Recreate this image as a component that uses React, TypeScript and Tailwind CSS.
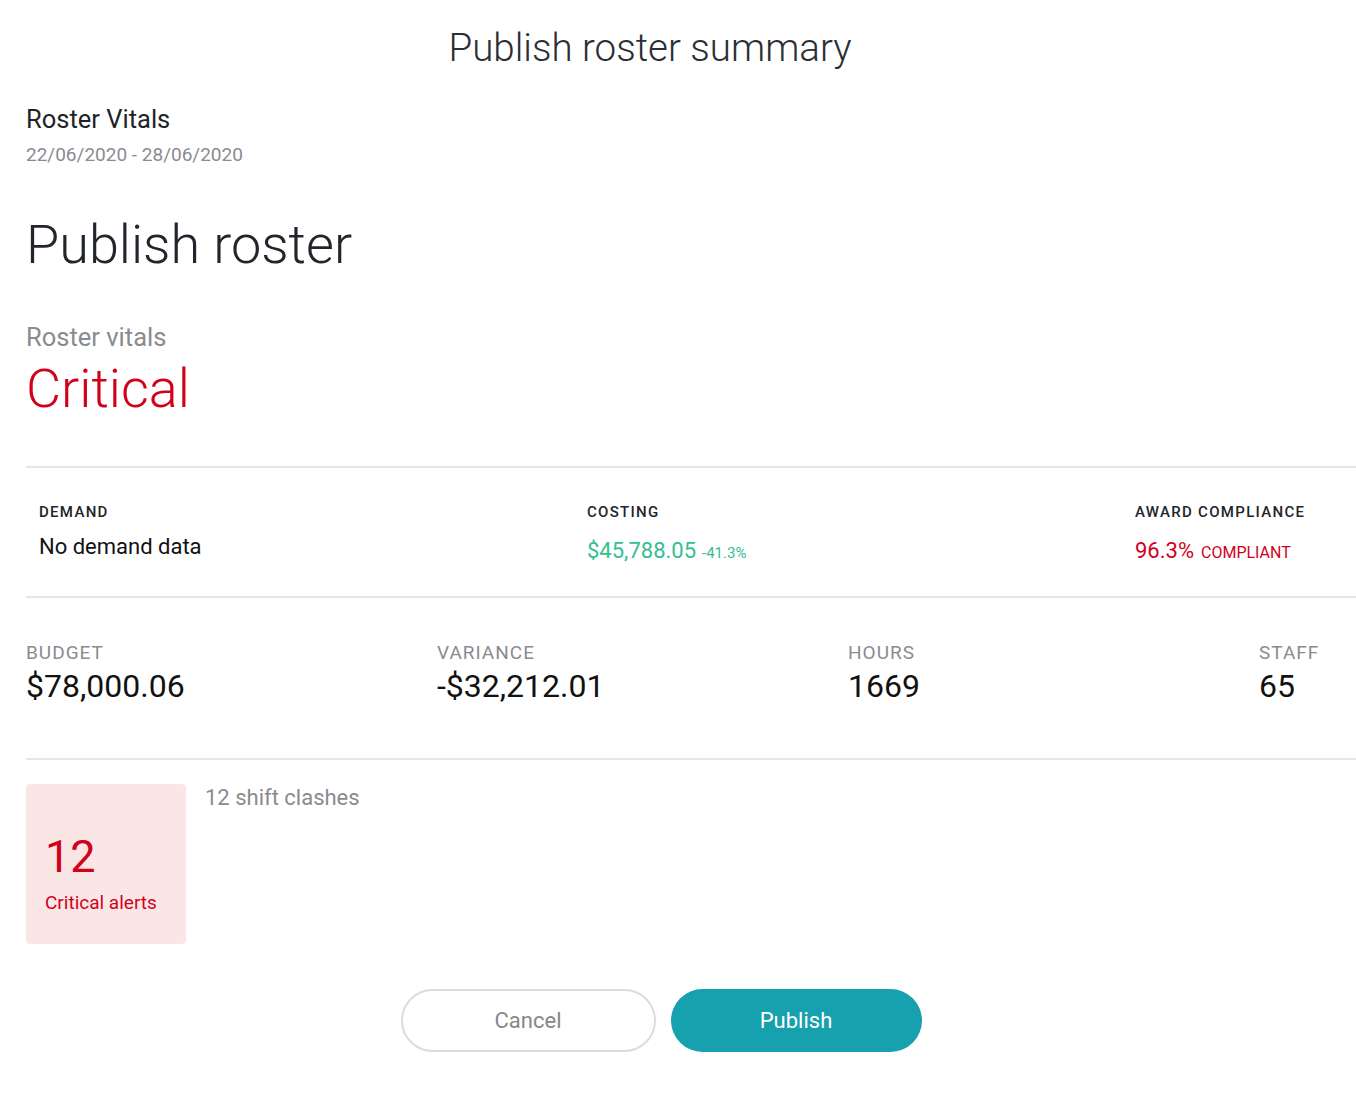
import React from 'react';

const font = { fontFamily: 'Roboto, "Noto Sans", sans-serif' };

const RosterSummary: React.FC = () => {
  return (
    <div className="w-[1356px] overflow-hidden bg-white text-[#22252b]" style={font}>
      <div className="w-[1670px] pl-[26px] pb-[46px]">
        {/* header */}
        <div className="w-[1274px] pt-[24px] text-center">
          <h1 className="-ml-[26px] w-[1300px] text-[38.5px] leading-[48px] font-light text-[#2b2e34]">Publish roster summary</h1>
        </div>

        <div className="mt-[31px] text-[25.5px] leading-[32px] text-[#1f2228]">Roster Vitals</div>
        <div className="mt-[8px] text-[19px] leading-[24px] text-[#8a8b90]">22/06/2020 - 28/06/2020</div>

        <div className="mt-[46px] text-[54px] leading-[64px] font-light text-[#22252b]">Publish roster</div>

        <div className="mt-[44px] text-[25.5px] leading-[32px] text-[#8a8b90]">Roster vitals</div>
        <div className="mt-[4px] text-[54px] leading-[64px] font-light text-[#d0021b]">Critical</div>

        <div className="mt-[45px] h-[2px] bg-[#e6e6e6]" />

        {/* demand / costing / compliance */}
        <div className="grid grid-cols-[548px_548px_548px] px-[13px] pt-[34px]">
          <div>
            <div className="text-[15px] leading-[20px] font-medium tracking-[1.3px] text-[#22252b]">DEMAND</div>
            <div className="mt-[11px] text-[22px] leading-[28px] text-[#111]">No demand data</div>
          </div>
          <div>
            <div className="text-[15px] leading-[20px] font-medium tracking-[1.3px] text-[#22252b]">COSTING</div>
            <div className="mt-[15px] flex items-baseline gap-[6px] text-[#33c08f]">
              <span className="text-[22px] leading-[28px]">$45,788.05</span>
              <span className="text-[15px]">-41.3%</span>
            </div>
          </div>
          <div>
            <div className="text-[15px] leading-[20px] font-medium tracking-[1.3px] text-[#22252b]">AWARD COMPLIANCE</div>
            <div className="mt-[15px] flex items-baseline gap-[7px] text-[#d0021b]">
              <span className="text-[22px] leading-[28px]">96.3%</span>
              <span className="text-[16px]">COMPLIANT</span>
            </div>
          </div>
        </div>

        <div className="mt-[31px] h-[2px] bg-[#e6e6e6]" />

        {/* budget / variance / hours / staff */}
        <div className="grid grid-cols-4 pt-[43px]">
          {[
            ['BUDGET', '$78,000.06'],
            ['VARIANCE', '-$32,212.01'],
            ['HOURS', '1669'],
            ['STAFF', '65'],
          ].map(([label, value]) => (
            <div key={label}>
              <div className="text-[19px] leading-[24px] tracking-[1px] text-[#8a8b90]">{label}</div>
              <div className="mt-[3px] text-[32px] leading-[36px] text-[#111]">{value}</div>
            </div>
          ))}
        </div>

        <div className="mt-[54px] h-[2px] bg-[#e6e6e6]" />

        {/* alerts */}
        <div className="mt-[24px] flex items-start">
          <div className="h-[160px] w-[160px] rounded-[4px] bg-[#fbe6e6] pl-[19px] pt-[45px] text-[#d0021b]">
            <div className="text-[45px] leading-[56px]">12</div>
            <div className="mt-[6px] text-[19px] leading-[24px]">Critical alerts</div>
          </div>
          <div className="ml-[19px] text-[22px] leading-[28px] text-[#8a8b90]">12 shift clashes</div>
        </div>

        {/* actions */}
        <div className="mt-[45px] flex w-[1270px] justify-center gap-[15px]">
          <button className="h-[63px] w-[255px] rounded-full border-2 border-[#dcdcdc] bg-white text-[22px] text-[#86878c]">
            Cancel
          </button>
          <button className="h-[63px] w-[251px] rounded-full bg-[#17a0ae] text-[22px] text-white">
            Publish
          </button>
        </div>
      </div>
    </div>
  );
};

export default function App() {
  return <RosterSummary />;
}
